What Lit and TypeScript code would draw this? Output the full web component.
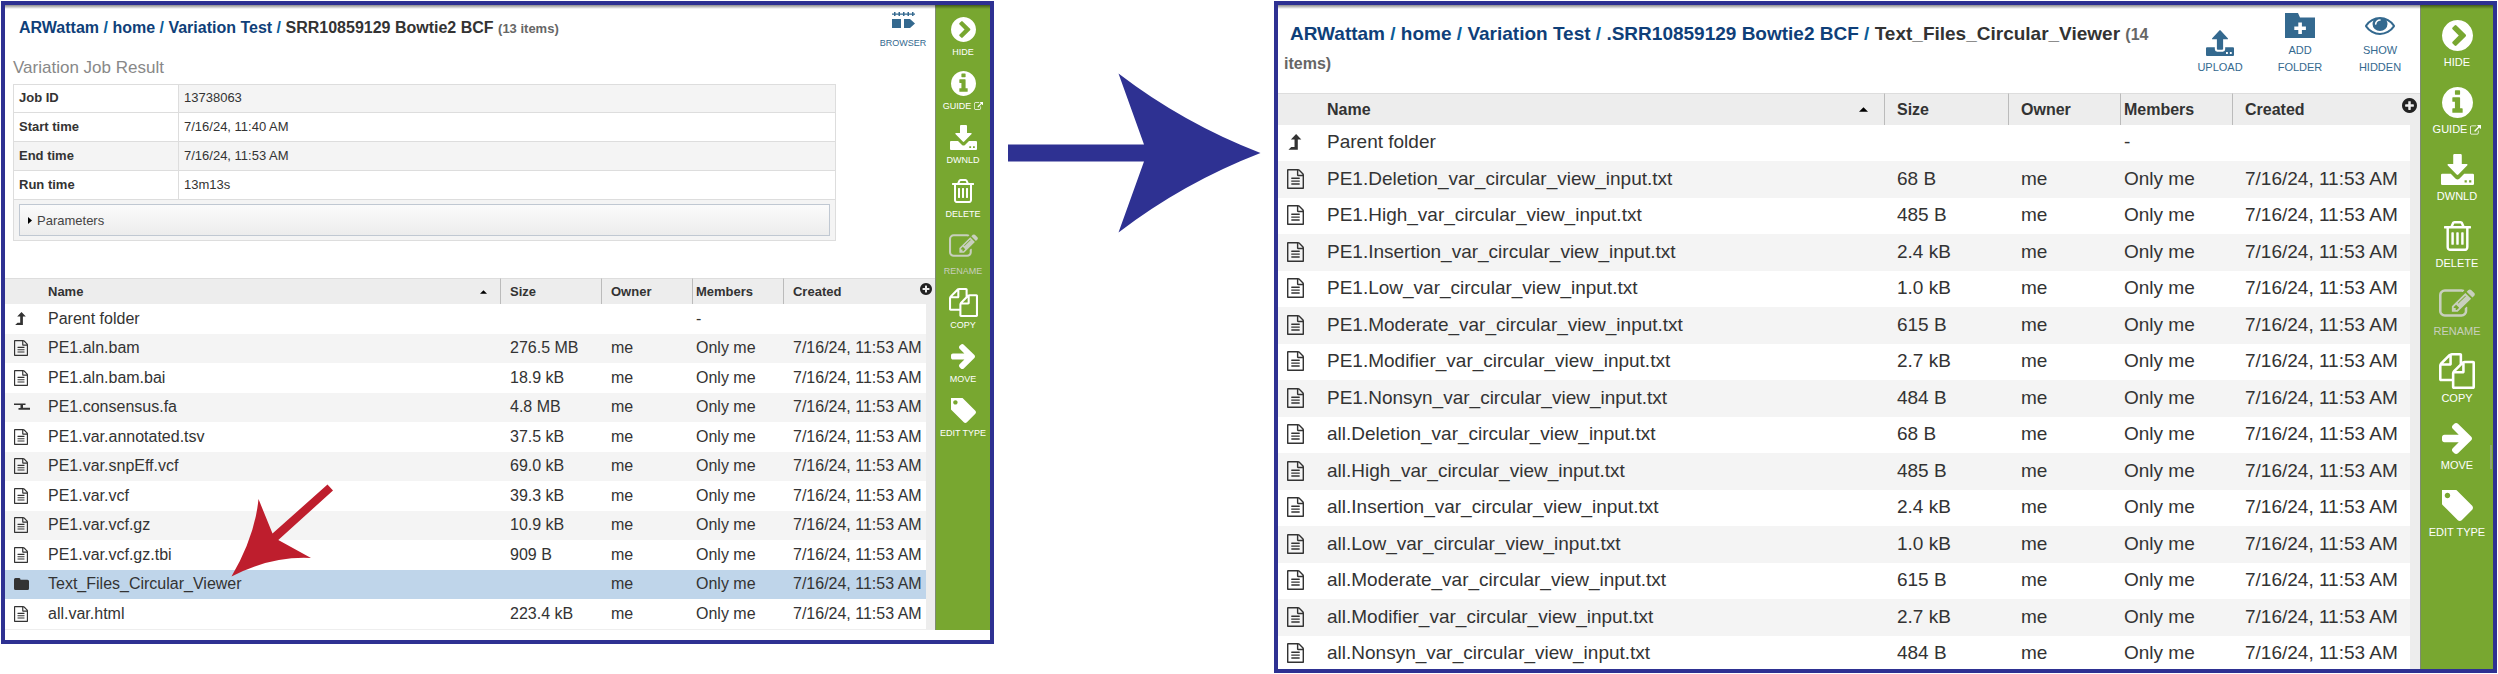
import { LitElement, html, svg, css, nothing } from "lit";
import { customElement, property } from "lit/decorators.js";
import { classMap } from "lit/directives/class-map.js";

interface Glyph {
  box: string;
  width: number;
  height: number;
  path: string;
}

interface FileRow {
  icon: string;
  name: string;
  size: string;
  owner: string;
  members: string;
  created: string;
  selected?: boolean;
}

const DISC =
  "q0 209-103 385.5t-279.5 279.5-385.5 103-385.5-103-279.5-279.5-103-385.5 103-385.5 279.5-279.5 385.5-103 385.5 103 279.5 279.5 103 385.5z";

/* width and height are in units of the compact panel's pixels */
const GLYPHS: Record<string, Glyph> = {
  hide: {
    box: "128 128 1536 1536", width: 25, height: 25,
    path: "M845 1395l454-454q19-19 19-45t-19-45l-454-454q-19-19-45-19t-45 19l-102 102q-19 19-19 45t19 45l307 307-307 307q-19 19-19 45t19 45l102 102q19 19 45 19t45-19zm819-499" + DISC,
  },
  guide: {
    box: "128 128 1536 1536", width: 25, height: 25,
    path: "M1152 1376v-160q0-14-9-23t-23-9h-96v-512q0-14-9-23t-23-9h-320q-14 0-23 9t-9 23v160q0 14 9 23t23 9h96v320h-96q-14 0-23 9t-9 23v160q0 14 9 23t23 9h448q14 0 23-9t9-23zm-128-896v-160q0-14-9-23t-23-9h-192q-14 0-23 9t-9 23v160q0 14 9 23t23 9h192q14 0 23-9t9-23zm640 416" + DISC,
  },
  download: {
    box: "0 0 27 25", width: 27, height: 25,
    path: "M11 0h5q1 0 1 1v7h4q1 0 .6 1l-7.400 7.600q-.7.7-1.400 0L5.400 9Q5 8 6 8h4V1q0-1 1-1zM1 16h7l4 3.900q1.500 1.300 3 0L19 16h7q1 0 1 1v7q0 1-1 1H1q-1 0-1-1v-7q0-1 1-1zm18.300 5.200v1.800h1.800v-1.800zm3.700 0v1.800h1.800v-1.800z",
  },
  upload: {
    box: "0 0 27 25", width: 23, height: 21,
    path: "M12.900.4q.6-.6 1.200 0L21 8q.6 1-.5 1H16.500v9q0 1-1 1h-4q-1 0-1-1V9H6.500Q5.400 9 6 8zM1 16.500h7.500v2q0 2.300 2.300 2.300h5.400q2.300 0 2.300-2.300v-2H26q1 0 1 1V24q0 1-1 1H1q-1 0-1-1v-6.500q0-1 1-1zm18.300 4.700v1.800h1.800v-1.800zm3.700 0v1.800h1.800v-1.800z",
  },
  trash: {
    box: "192 128 1408 1536", width: 22, height: 24,
    path: "M704 736v576q0 14-9 23t-23 9h-64q-14 0-23-9t-9-23v-576q0-14 9-23t23-9h64q14 0 23 9t9 23zm256 0v576q0 14-9 23t-23 9h-64q-14 0-23-9t-9-23v-576q0-14 9-23t23-9h64q14 0 23 9t9 23zm256 0v576q0 14-9 23t-23 9h-64q-14 0-23-9t-9-23v-576q0-14 9-23t23-9h64q14 0 23 9t9 23zm128 724v-948h-896v948q0 22 7 40.500t14.500 27 10.500 8.500h832q3 0 10.500-8.500t14.500-27 7-40.500zm-672-1076h448l-48-117q-7-9-17-11h-317q-10 2-17 11zm928 32v64q0 14-9 23t-23 9h-96v948q0 83-47 143.500t-113 60.500h-832q-66 0-113-58.500t-47-141.500v-952h-96q-14 0-23-9t-9-23v-64q0-14 9-23t23-9h309l70-167q15-37 54-63t79-26h320q40 0 79 26t54 63l70 167h309q14 0 23 9t9 23z",
  },
  rename: {
    box: "0 110 1792 1440", width: 29, height: 23,
    path: "M888 1184l116-116-152-152-116 116v56h96v96h56zm440-720q-16-16-33 1l-350 350q-17 17-1 33t33-1l350-350q17-17 1-33zm80 594v190q0 119-84.500 203.500t-203.500 84.500h-832q-119 0-203.500-84.500t-84.500-203.500v-832q0-119 84.500-203.500t203.500-84.500h832q63 0 117 25 15 7 18 23 3 17-9 29l-49 49q-14 14-32 8-23-6-45-6h-832q-66 0-113 47t-47 113v832q0 66 47 113t113 47h832q66 0 113-47t47-113v-126q0-13 9-22l64-64q15-15 35-7t20 29zm-96-738l288 288-672 672h-288v-288zm444 132l-92 92-288-288 92-92q28-28 68-28t68 28l152 152q28 28 28 68t-28 68z",
  },
  copy: {
    box: "0 0 1792 1792", width: 29, height: 29,
    path: "M1696 384q40 0 68 28t28 68v1216q0 40-28 68t-68 28h-960q-40 0-68-28t-28-68v-288h-544q-40 0-68-28t-28-68v-672q0-40 20-88t48-76l408-408q28-28 76-48t88-20h416q40 0 68 28t28 68v328q68-40 128-40h416zm-544 213l-299 299h299v-299zm-640-384l-299 299h299v-299zm196 647l316-316v-416h-384v416q0 40-28 68t-68 28h-416v640h512v-256q0-40 20-88t48-76zm956 804v-1152h-384v416q0 40-28 68t-68 28h-416v640h896z",
  },
  move: {
    box: "128 180 1472 1560", width: 24, height: 25,
    path: "M1600 960q0 54-37 91l-651 651q-39 37-91 37-51 0-90-37l-75-75q-38-38-38-91t38-91l293-293h-704q-52 0-84.500-37.500t-32.500-90.500v-128q0-53 32.500-90.500t84.500-37.500h704l-293-294q-38-36-38-90t38-90l75-75q38-38 90-38 53 0 91 38l651 651q37 35 37 90z",
  },
  tag: {
    box: "192 192 1452 1452", width: 25, height: 25,
    path: "M576 448q0-53-37.500-90.500t-90.500-37.500-90.500 37.500-37.500 90.500 37.500 90.500 90.500 37.500 90.500-37.500 37.500-90.500zm1067 576q0 53-37 90l-491 492q-39 37-91 37-53 0-90-37l-715-716q-38-37-64.500-101t-26.500-117v-416q0-52 38-90t90-38h416q53 0 117 26.500t102 64.500l715 714q37 39 37 91z",
  },
  external: {
    box: "0 64 1792 1536", width: 9, height: 8,
    path: "M1408 928v320q0 119-84.500 203.500t-203.500 84.500h-832q-119 0-203.500-84.500t-84.500-203.500v-832q0-119 84.500-203.500t203.500-84.500h704q14 0 23 9t9 23v64q0 14-9 23t-23 9h-704q-66 0-113 47t-47 113v832q0 66 47 113t113 47h832q66 0 113-47t47-113v-320q0-14 9-23t23-9h64q14 0 23 9t9 23zm384-864v512q0 26-19 45t-45 19-45-19l-176-176-652 652q-10 10-23 10t-23-10l-114-114q-10-10-10-23t10-23l652-652-176-176q-19-19-19-45t19-45 45-19h512q26 0 45 19t19 45z",
  },
  eye: {
    box: "0 384 1792 1152", width: 24, height: 15,
    path: "M1664 960q-152-236-381-353 61 104 61 225 0 185-131.500 316.500t-316.500 131.500-316.500-131.500-131.500-316.500q0-121 61-225-229 117-381 353 133 205 333.500 326.500t434.500 121.500 434.500-121.500 333.500-326.500zm-720-384q0-20-14-34t-34-14q-125 0-214.500 89.500t-89.500 214.500q0 20 14 34t34 14 34-14 14-34q0-86 61-147t147-61q20 0 34-14t14-34zm848 384q0 34-20 69-140 230-376.500 368.500t-499.500 138.500-499.500-139-376.500-368q-20-35-20-69t20-69q140-229 376.500-368t499.500-139 499.500 139 376.500 368q20 35 20 69z",
  },
  addFolder: {
    box: "0 0 30 25", width: 24, height: 20,
    path: "M0 0h13l2 4.500h15V25H0zM13.300 9.500v4h-4v3.600h4v4h3.600v-4h4v-3.600h-4v-4z",
  },
  browser: {
    box: "0 0 23 16", width: 23, height: 16,
    path: "M0 1.500h2V0h1.500v1.500h3V0H8v1.500h3V0h1.500v1.500h3V0H17v1.500h3V0h1.500v1.500H23v1.200h-1.500V4H20V2.700h-3V4h-1.500V2.700h-3V4H11V2.700H8V4H6.500V2.700h-3V4H2V2.700H0zM0 7h9v9H0zM12 7h6l5 4.500-5 4.500h-6z",
  },
  plus: {
    box: "128 128 1536 1536", width: 12, height: 12,
    path: "M1344 960v-128q0-26-19-45t-45-19h-256v-256q0-26-19-45t-45-19h-128q-26 0-45 19t-19 45v256h-256q-26 0-45 19t-19 45v128q0 26 19 45t45 19h256v256q0 26 19 45t45 19h128q26 0 45-19t19-45v-256h256q26 0 45-19t19-45zm320-64" + DISC,
  },
  file: {
    box: "128 0 1536 1792", width: 14, height: 16,
    path: "M1596 380q28 28 48 76t20 88v1152q0 40-28 68t-68 28h-1344q-40 0-68-28t-28-68v-1600q0-40 28-68t68-28h896q40 0 88 20t76 48zm-444-244v376h376q-10-29-22-41l-313-313q-12-12-41-22zm384 1528v-1024h-416q-40 0-68-28t-28-68v-416h-768v1536h1280zm-1024-864q0-14 9-23t23-9h704q14 0 23 9t9 23v64q0 14-9 23t-23 9h-704q-14 0-23-9t-9-23v-64zm736 224q14 0 23 9t9 23v64q0 14-9 23t-23 9h-704q-14 0-23-9t-9-23v-64q0-14 9-23t23-9h704zm0 256q14 0 23 9t9 23v64q0 14-9 23t-23 9h-704q-14 0-23-9t-9-23v-64q0-14 9-23t23-9h704z",
  },
  parent: {
    box: "0 0 14 14", width: 14, height: 14,
    path: "M7.500 0l4.300 4.600H8.900V13H1.200l2.300-2.300H6.200V4.600H3.200z",
  },
  fasta: {
    box: "0 0 16 8", width: 16, height: 8,
    path: "M0 0.500h11.500v1.500H9v2.800h7V6.800H4.500V5H6.500V2H0z",
  },
  folder: {
    box: "0 0 15 12", width: 15, height: 12,
    path: "M1.500 0h3.700q1.300 0 1.300 1.700h7q1.500 0 1.500 1.500v7.300q0 1.500-1.500 1.500h-12Q0 12 0 10.500v-9Q0 0 1.500 0z",
  },
};

function glyph(name: string, large: boolean) {
  const g = GLYPHS[name];
  const k = large ? 1.23 : 1;
  return svg`<svg class="glyph" aria-hidden="true" viewBox=${g.box} preserveAspectRatio="none"
    width=${Math.round(g.width * k)} height=${Math.round(g.height * k)}>
    <path fill="currentColor" fill-rule="evenodd" d=${g.path}></path></svg>`;
}

const ACTIONS = [
  { icon: "hide", label: "HIDE" },
  { icon: "guide", label: "GUIDE", href: "#guide" },
  { icon: "download", label: "DWNLD" },
  { icon: "trash", label: "DELETE" },
  { icon: "rename", label: "RENAME", disabled: true },
  { icon: "copy", label: "COPY" },
  { icon: "move", label: "MOVE" },
  { icon: "tag", label: "EDIT TYPE" },
];

@customElement("workspace-panel")
export class WorkspacePanel extends LitElement {
  @property({ type: Boolean, reflect: true }) large = false;
  @property({ attribute: false }) path: string[] = [];
  @property() current = "";
  @property() count = "";
  @property({ attribute: false }) tools: { icon: string; label: string }[] = [];
  @property({ attribute: false }) rows: FileRow[] = [];
  @property({ attribute: false }) job: [string, string][] = [];

  static styles = css`
    :host {
      --text: 16px;
      --head-text: 13px;
      --tiny: 9px;
      --tiny-line: 14px;
      --pad: 9px;
      --head-row: 26px;
      --row-odd: 30px;
      --row-even: 29px;
      --row-lift: 1px;
      --icon-col: 34px;
      --size-col: 101px;
      --owner-col: 91px;
      --members-col: 91px;
      --created-col: 143px;
      --gutter: 9px;
      --sort-inset: 13px;
      --rail: 55px;
      --rail-top: 9px;
      --rail-item: 54px;
      --rail-icon: 30px;
      --rail-gap: 1px;
      --rail-extra: 3px;
      --crumb-top: 11px;
      --crumb-line: 24px;
      --crumb-gap: 16px;
      --tool-width: 64px;
      --tool-top: 7px;
      --tool-icon: 16px;
      --tool-gap: 8px;
      display: block;
      position: relative;
      box-sizing: border-box;
      border: 4px solid #2e3192;
      padding-bottom: 10px;
      background: #fff;
      color: #333;
      font-family: "Liberation Sans", Arial, sans-serif;
      font-size: var(--text);
    }
    :host([large]) {
      --text: 19px;
      --head-text: 16px;
      --tiny: 11px;
      --tiny-line: 17px;
      --pad: 12px;
      --head-row: 32px;
      --row-odd: 36px;
      --row-even: 37px;
      --row-lift: 2px;
      --icon-col: 37px;
      --size-col: 124px;
      --owner-col: 112px;
      --members-col: 112px;
      --created-col: 178px;
      --gutter: 10px;
      --sort-inset: 16px;
      --rail: 73px;
      --rail-top: 12px;
      --rail-item: 67px;
      --rail-icon: 36px;
      --rail-gap: 1px;
      --rail-extra: 1px;
      --crumb-top: 14px;
      --crumb-line: 29px;
      --crumb-gap: 16px;
      --tool-width: 80px;
      --tool-top: 8px;
      --tool-icon: 25px;
      --tool-gap: 4px;
      height: 100%;
      padding-bottom: 0;
      overflow: hidden;
    }
    :host::before {
      content: "";
      position: absolute;
      inset: 0 0 auto;
      height: 4px;
      background: linear-gradient(rgba(0, 0, 0, 0.45), rgba(0, 0, 0, 0));
    }
    .glyph {
      display: block;
      flex: none;
    }
    .frame {
      display: flex;
      align-items: stretch;
    }
    :host([large]) .frame {
      height: 100%;
    }
    .content {
      flex: 1;
      min-width: 0;
      border-bottom: 1px solid #eee;
    }
    .head {
      display: flex;
      align-items: flex-start;
      justify-content: space-between;
    }
    .crumbs {
      flex: 1;
      margin: 0;
      padding: var(--crumb-top) 0 var(--crumb-gap) 8px;
      font-size: var(--text);
      line-height: var(--crumb-line);
      font-weight: bold;
    }
    :host([large]) .crumbs {
      padding-left: 6px;
    }
    .crumbs a {
      color: #0f3f79;
      text-decoration: none;
    }
    .crumbs a:first-child {
      margin-left: 6px;
    }
    .slash {
      color: #0b5d98;
    }
    .count {
      color: #666;
      font-size: var(--head-text);
      line-height: 1;
    }
    .tools {
      display: flex;
      padding: var(--tool-top) 0 0;
    }
    .tool {
      display: flex;
      flex-direction: column;
      align-items: center;
      justify-content: flex-end;
      gap: var(--tool-gap);
      width: var(--tool-width);
      padding: 0;
      border: 0;
      background: none;
      color: #34698f;
      font: inherit;
      font-size: var(--tiny);
      line-height: var(--tiny-line);
      cursor: pointer;
    }
    .tool-icon {
      display: flex;
      align-items: center;
      height: var(--tool-icon);
    }
    .tool-label {
      white-space: pre-line;
    }

    .job-title {
      margin: 0 0 4px 8px;
      color: #888;
      font-size: 17px;
      line-height: 24px;
      font-weight: normal;
    }
    .job {
      margin: 0 99px 37px 8px;
      border: 1px solid #ddd;
      background: #f4f4f4;
      font-size: 13px;
    }
    .job-table {
      width: 100%;
      border-collapse: separate;
      border-spacing: 0;
      table-layout: fixed;
    }
    .job-table th,
    .job-table td {
      box-sizing: border-box;
      height: 29px;
      padding: 0 5px 2px;
      border-bottom: 1px solid #ddd;
      text-align: left;
      background: #f4f4f4;
    }
    .job-table tr:first-child > * {
      height: 28px;
    }
    .job-table th {
      width: 165px;
      border-right: 1px solid #ddd;
    }
    .job-table tr:nth-child(even) > *,
    .job-table tr:first-child th {
      background: #fff;
    }
    .parameters {
      display: flex;
      align-items: center;
      gap: 5px;
      width: calc(100% - 10px);
      height: 32px;
      margin: 4px 5px;
      padding: 0 8px;
      border: 1px solid #c0c8d2;
      background: linear-gradient(#fbfbfb, #ececec);
      color: #444;
      font: inherit;
      cursor: pointer;
    }

    .files {
      width: 100%;
      border-collapse: separate;
      border-spacing: 0;
      table-layout: fixed;
    }
    .c-icon { width: var(--icon-col); }
    .c-size { width: var(--size-col); }
    .c-owner { width: var(--owner-col); }
    .c-members { width: var(--members-col); }
    .c-created { width: var(--created-col); }
    .c-gutter { width: var(--gutter); }
    .files th,
    .files td {
      box-sizing: border-box;
      padding: 0 0 0 var(--pad);
      border-left: 1px solid transparent;
      text-align: left;
      white-space: nowrap;
    }
    .files th {
      position: relative;
      height: var(--head-row);
      border-top: 1px solid #ddd;
      background: #ededed;
      font-size: var(--head-text);
    }
    .files .name,
    .files .icon {
      border-left: 0;
    }
    .files .icon {
      padding-left: 9px;
    }
    .files .members {
      padding-left: 3px;
    }
    .files th.ruled {
      border-left-color: #bbb;
    }
    .files td {
      height: var(--row-odd);
      padding-bottom: var(--row-lift);
      background: #fff;
    }
    .files tbody tr:nth-child(even) td {
      height: var(--row-even);
      background: #f4f4f4;
    }
    .files tbody tr.selected td {
      background: #bfd5ea;
    }
    .files tbody td.gutter,
    .files tbody tr:nth-child(even) td.gutter,
    .files tbody tr.selected td.gutter {
      padding: 0;
      background: #ededed;
    }
    .sortable {
      display: flex;
      align-items: center;
      justify-content: space-between;
      padding-right: var(--sort-inset);
    }
    .add-column {
      position: absolute;
      top: 4px;
      right: 3px;
      padding: 0;
      border: 0;
      background: none;
      color: #222;
      cursor: pointer;
    }

    .rail {
      box-sizing: border-box;
      flex: none;
      width: var(--rail);
      padding-top: var(--rail-top);
      border-left: 1px solid #7f8b72;
      background: #78a730;
    }
    .action {
      box-sizing: border-box;
      display: flex;
      flex-direction: column;
      align-items: center;
      gap: var(--rail-gap);
      width: 100%;
      height: var(--rail-item);
      padding: 0;
      border: 0;
      background: none;
      color: #fff;
      font: inherit;
      font-size: var(--tiny);
      line-height: var(--tiny-line);
      text-decoration: none;
      white-space: nowrap;
      cursor: pointer;
    }
    .action:disabled {
      height: calc(var(--rail-item) + var(--rail-extra));
      gap: calc(var(--rail-gap) + var(--rail-extra));
      color: #c8cfbd;
      cursor: default;
    }
    .action-icon {
      display: flex;
      flex: none;
      align-items: center;
      height: var(--rail-icon);
    }
    .action-label {
      display: flex;
      align-items: center;
      gap: 3px;
    }
    .scroll-thumb {
      position: absolute;
      right: 1px;
      top: 440px;
      width: 2px;
      height: 24px;
      background: #8fa56c;
    }
    .pointer {
      position: absolute;
      left: 226px;
      top: 479px;
    }
  `;

  private renderJob() {
    return html`
      <h2 class="job-title">Variation Job Result</h2>
      <div class="job">
        <table class="job-table">
          <tbody>
            ${this.job.map(([k, v]) => html`<tr><th scope="row">${k}</th><td>${v}</td></tr>`)}
          </tbody>
        </table>
        <button class="parameters" type="button" aria-expanded="false">
          <svg class="glyph" width="4" height="7" viewBox="0 0 4 7" aria-hidden="true"><path d="M0 0l4 3.500L0 7z"></path></svg>
          Parameters
        </button>
      </div>`;
  }

  private renderFiles() {
    const L = this.large;
    return html`
      <table class="files">
        <colgroup>
          <col class="c-icon" /><col /><col class="c-size" /><col class="c-owner" />
          <col class="c-members" /><col class="c-created" /><col class="c-gutter" />
        </colgroup>
        <thead>
          <tr>
            <th class="icon"></th>
            <th class="name" scope="col" aria-sort="ascending">
              <span class="sortable">Name
                <svg class="glyph" width=${L ? 9 : 7} height=${L ? 5 : 4} viewBox="0 0 8 4" aria-hidden="true"><path d="M4 0l4 4H0z"></path></svg>
              </span>
            </th>
            <th class="ruled" scope="col">Size</th>
            <th class="ruled" scope="col">Owner</th>
            <th class="ruled members" scope="col">Members</th>
            <th class="ruled" scope="col" colspan="2">Created
              <button class="add-column" type="button" aria-label="Choose columns">${glyph("plus", L)}</button>
            </th>
          </tr>
        </thead>
        <tbody>
          ${this.rows.map((r) => html`
            <tr class=${classMap({ selected: !!r.selected })}>
              <td class="icon">${glyph(r.icon, L)}</td>
              <td class="name">${r.name}</td>
              <td>${r.size}</td>
              <td>${r.owner}</td>
              <td class="members">${r.members}</td>
              <td>${r.created}</td>
              <td class="gutter"></td>
            </tr>`)}
        </tbody>
      </table>`;
  }

  private renderAction(a: (typeof ACTIONS)[number]) {
    const body = html`
      <span class="action-icon">${glyph(a.icon, this.large)}</span>
      <span class="action-label">${a.label}${a.href ? glyph("external", this.large) : nothing}</span>`;
    return a.href
      ? html`<a class="action" href=${a.href}>${body}</a>`
      : html`<button class="action" type="button" ?disabled=${!!a.disabled}>${body}</button>`;
  }

  render() {
    return html`
      <div class="frame">
        <div class="content">
          <div class="head">
            <h1 class="crumbs">${this.path.map((p) => html`<a href="#">${p}</a> <span class="slash">/</span> `)}${this.current}
              <span class="count">${this.count}</span></h1>
            <div class="tools">
              ${this.tools.map((t) => html`
                <button class="tool" type="button">
                  <span class="tool-icon">${glyph(t.icon, this.large)}</span>
                  <span class="tool-label">${t.label}</span>
                </button>`)}
            </div>
          </div>
          ${this.job.length ? this.renderJob() : nothing}
          ${this.renderFiles()}
        </div>
        <nav class="rail" aria-label="Actions">${ACTIONS.map((a) => this.renderAction(a))}</nav>
      </div>
      ${this.large
        ? html`<div class="scroll-thumb"></div>`
        : html`<svg class="pointer" width="102" height="93" viewBox="0 0 102 93" aria-hidden="true">
            <path fill="#be1e2d" d="M96.500 0.500l5.500 6L47.300 56 80 74Q40 72 0.500 92.500 24 52 27.500 15L41.500 49.500z"></path>
          </svg>`}`;
  }
}

const WHEN = "7/16/24, 11:53 AM";
const parentRow: FileRow = { icon: "parent", name: "Parent folder", size: "", owner: "", members: "-", created: "" };
const entry = (name: string, size: string, icon = "file", selected = false): FileRow => ({
  icon, name, size, owner: "me", members: "Only me", created: WHEN, selected,
});

const RESULT_ROWS = [
  parentRow,
  entry("PE1.aln.bam", "276.5 MB"),
  entry("PE1.aln.bam.bai", "18.9 kB"),
  entry("PE1.consensus.fa", "4.8 MB", "fasta"),
  entry("PE1.var.annotated.tsv", "37.5 kB"),
  entry("PE1.var.snpEff.vcf", "69.0 kB"),
  entry("PE1.var.vcf", "39.3 kB"),
  entry("PE1.var.vcf.gz", "10.9 kB"),
  entry("PE1.var.vcf.gz.tbi", "909 B"),
  entry("Text_Files_Circular_Viewer", "", "folder", true),
  entry("all.var.html", "223.4 kB"),
];

const KINDS: [string, string][] = [
  ["Deletion", "68 B"],
  ["High", "485 B"],
  ["Insertion", "2.4 kB"],
  ["Low", "1.0 kB"],
  ["Moderate", "615 B"],
  ["Modifier", "2.7 kB"],
  ["Nonsyn", "484 B"],
];

const VIEWER_ROWS = [
  parentRow,
  ...["PE1", "all"].flatMap((p) => KINDS.map(([k, s]) => entry(`${p}.${k}_var_circular_view_input.txt`, s))),
];

@customElement("app-root")
export class AppRoot extends LitElement {
  static styles = css`
    :host {
      box-sizing: border-box;
      display: grid;
      grid-template-columns: minmax(0, 993fr) minmax(0, 280fr) minmax(0, 1223fr);
      grid-template-rows: minmax(0, 1fr);
      height: 100vh;
      padding: 1px;
      background: #fff;
    }
    .result {
      align-self: start;
    }
    .step {
      display: block;
      justify-self: center;
      margin-top: 72px;
      max-width: 100%;
    }
  `;

  render() {
    return html`
      <workspace-panel
        class="result"
        .path=${["ARWattam", "home", "Variation Test"]}
        current="SRR10859129 Bowtie2 BCF"
        count="(13 items)"
        .tools=${[{ icon: "browser", label: "BROWSER" }]}
        .job=${[
          ["Job ID", "13738063"],
          ["Start time", "7/16/24, 11:40 AM"],
          ["End time", "7/16/24, 11:53 AM"],
          ["Run time", "13m13s"],
        ]}
        .rows=${RESULT_ROWS}
      ></workspace-panel>
      <svg class="step" width="253" height="160" viewBox="0 0 253 160" aria-hidden="true">
        <path fill="#2e3192" d="M0 71.500h136L110.500 0.500Q175 50 252.500 80 175 110 110.500 159.500L136 88.500H0z"></path>
      </svg>
      <workspace-panel
        large
        .path=${["ARWattam", "home", "Variation Test", ".SRR10859129 Bowtie2 BCF"]}
        current="Text_Files_Circular_Viewer"
        count="(14 items)"
        .tools=${[
          { icon: "upload", label: "UPLOAD" },
          { icon: "addFolder", label: "ADD\nFOLDER" },
          { icon: "eye", label: "SHOW\nHIDDEN" },
        ]}
        .rows=${VIEWER_ROWS}
      ></workspace-panel>`;
  }
}
